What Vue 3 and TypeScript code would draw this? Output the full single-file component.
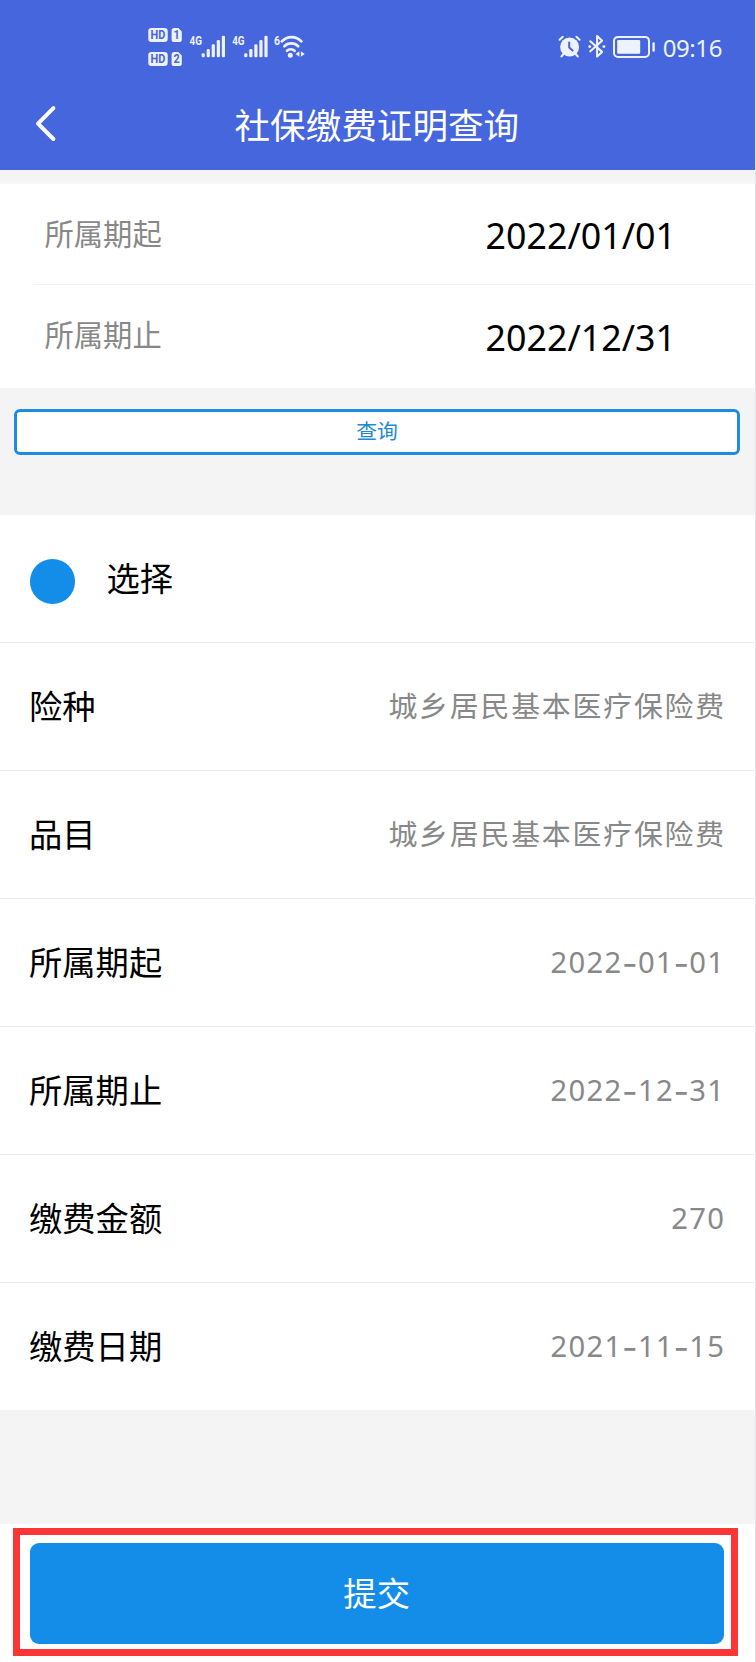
<script setup lang="ts">
interface Field {
  label: string
  value: string
}

const title = '社保缴费证明查询'

const period: Field[] = [
  { label: '所属期起', value: '2022/01/01' },
  { label: '所属期止', value: '2022/12/31' },
]

const details: Field[] = [
  { label: '险种', value: '城乡居民基本医疗保险费' },
  { label: '品目', value: '城乡居民基本医疗保险费' },
  { label: '所属期起', value: '2022-01-01' },
  { label: '所属期止', value: '2022-12-31' },
  { label: '缴费金额', value: '270' },
  { label: '缴费日期', value: '2021-11-15' },
]

const isNumeric = (value: string): boolean => /^[\d-]+$/.test(value)
const pieces = (value: string): string[] => value.split(/(-)/)

const bars = [4, 8.3, 13, 17.3, 21.6]
const signals = [0, 42.6]
</script>

<template>
  <div class="screen">
    <header class="header">
      <div class="status">
        <svg class="status-left" width="160" height="44" viewBox="148 26 160 44">
          <g fill="#eef2ff">
            <rect x="148.3" y="28" width="19.4" height="14" rx="3.2" />
            <path d="M174.2 28h4.2l3.4 3.4v8a2.6 2.6 0 0 1-2.6 2.6h-5a2.6 2.6 0 0 1-2.6-2.6v-8.8a2.6 2.6 0 0 1 2.6-2.6z" />
            <rect x="148.3" y="52" width="19.4" height="14" rx="3.2" />
            <path d="M174.2 52h4.2l3.4 3.4v8a2.6 2.6 0 0 1-2.6 2.6h-5a2.6 2.6 0 0 1-2.6-2.6v-8.8a2.6 2.6 0 0 1 2.6-2.6z" />
          </g>
          <g class="badge-text">
            <text x="150.6" y="39.3" textLength="14.8" lengthAdjust="spacingAndGlyphs">HD</text>
            <text x="173.5" y="39.3" textLength="6.2" lengthAdjust="spacingAndGlyphs">1</text>
            <text x="150.6" y="63.3" textLength="14.8" lengthAdjust="spacingAndGlyphs">HD</text>
            <text x="173.5" y="63.3" textLength="6.2" lengthAdjust="spacingAndGlyphs">2</text>
          </g>
          <g v-for="dx in signals" :key="dx" :transform="`translate(${dx} 0)`">
            <text class="net-text" x="189.6" y="45.4" textLength="12.4" lengthAdjust="spacingAndGlyphs">4G</text>
            <rect
              v-for="(h, i) in bars"
              :key="i"
              :x="201.6 + i * 5.05"
              :y="57.3 - h"
              width="3.2"
              :height="h"
              rx="1.3"
              fill="#eef2ff"
            />
          </g>
          <text class="net-text" x="274" y="45.4" textLength="6" lengthAdjust="spacingAndGlyphs">6</text>
          <g fill="none" stroke="#eef2ff" stroke-width="2.7" stroke-linecap="round">
            <path d="M281.8 41.3a13.4 13.4 0 0 1 19.6 0" />
            <path d="M284.4 46.2a9.8 9.8 0 0 1 13.8 0" />
            <path d="M287 50.8a5.8 5.8 0 0 1 7.600 0" />
          </g>
          <circle cx="290.3" cy="55.3" r="2.5" fill="#eef2ff" />
          <path d="M299.4 51.2v5.6l-3.8-2.8zM300.9 51.2v5.6l3.8-2.8z" fill="#eef2ff" />
        </svg>
        <div class="status-right">
          <svg width="98" height="28" viewBox="558 33 98 28">
            <g stroke="#eef2ff" fill="none" stroke-linecap="round" stroke-linejoin="round">
              <circle cx="569.6" cy="47" r="9.5" fill="#eef2ff" stroke="none" />
              <path d="M559.6 39.8l3.2-3M576.4 36.8l3.2 3" stroke-width="2" />
              <path d="M563.5 54l-2 2.4M575.7 54l2 2.4" stroke-width="2.2" />
              <path d="M569.2 42.4v5l3.4 3.2" stroke="#4566dd" stroke-width="2" />
              <path d="M590.3 41.3l11.8 10.6-5 4.7V36l5 4.7-11.8 10.6" stroke-width="2.1" />
              <path d="M589.6 46.6h.2M603.8 46.6h.2" stroke-width="2.8" />
              <rect x="614" y="36.9" width="35" height="20" rx="4" stroke-width="2" />
              <path d="M653.6 43.5v7" stroke-width="2.4" />
            </g>
            <rect x="617.2" y="40" width="23" height="13.8" rx="1.3" fill="#eef2ff" />
          </svg>
          <span class="clock">09:16</span>
        </div>
      </div>
      <div class="nav">
        <svg class="back" width="24" height="38" viewBox="0 0 24 38">
          <path d="M20.4 3.2L5 18.6l15.4 15.4" fill="none" stroke="#fff" stroke-width="4" stroke-linecap="round" stroke-linejoin="round" />
        </svg>
        <h1 class="title">{{ title }}</h1>
      </div>
    </header>

    <section class="period">
      <div v-for="f in period" :key="f.label" class="period-row">
        <span class="period-label">{{ f.label }}</span>
        <span class="period-value">{{ f.value }}</span>
      </div>
    </section>

    <div class="query">
      <button class="query-btn" type="button">查询</button>
    </div>

    <section class="details">
      <div class="row">
        <span class="radio"></span>
        <span class="label">选择</span>
      </div>
      <div v-for="(f, i) in details" :key="i" class="row">
        <span class="label">{{ f.label }}</span>
        <span v-if="isNumeric(f.value)" class="value number"><span v-for="(p, n) in pieces(f.value)" :key="n" :class="{ dash: p === '-' }">{{ p }}</span></span>
        <span v-else class="value">{{ f.value }}</span>
      </div>
    </section>

    <footer class="footer">
      <div class="highlight">
        <button class="submit" type="button">提交</button>
      </div>
    </footer>
  </div>
</template>

<style>
body {
  margin: 0;
  background: #fff;
}
</style>

<style scoped>
.screen {
  box-sizing: border-box;
  width: 756px;
  height: 1662px;
  overflow: hidden;
  display: flex;
  flex-direction: column;
  background: #f4f4f4;
  border-right: 1px solid #e4e4e6;
  font-family: 'Noto Sans', 'Noto Sans CJK SC', sans-serif;
  color: #000;
}

.header {
  height: 169.5px;
  flex: none;
  display: flex;
  flex-direction: column;
  background: #4566dd;
  color: #fff;
}

.status {
  height: 70px;
  padding: 26px 33px 0 148px;
  box-sizing: border-box;
  display: flex;
  justify-content: space-between;
}

.status-left {
  display: block;
}

.badge-text {
  font: 700 12.5px Roboto, sans-serif;
  fill: #4566dd;
}

.net-text {
  font: 700 13px Roboto, sans-serif;
  fill: #eef2ff;
}

.status-right {
  display: flex;
  align-items: flex-start;
  padding-top: 7px;
}

.clock {
  margin-left: 7px;
  font-size: 24px;
  line-height: 29px;
  letter-spacing: -0.4px;
  color: #eef2ff;
}

.nav {
  flex: 1;
  display: flex;
  align-items: flex-start;
  padding-left: 33px;
}

.back {
  margin-top: 35px;
}

.title {
  margin: 30px 0 0 177.5px;
  font-size: 35.6px;
  line-height: 50px;
  font-weight: 400;
}

.period {
  margin-top: 14.5px;
  flex: none;
  background: #fff;
  box-shadow: 0 -1px 3px #fafafa;
}

.period-row {
  height: 101px;
  box-sizing: border-box;
  margin-left: 33px;
  padding: 0 79px 0 11.5px;
  display: flex;
  align-items: center;
  justify-content: space-between;
}

.period-row + .period-row {
  height: 103px;
  margin-top: -1px;
  padding-bottom: 1px;
  border-top: 1px solid #f2f2f2;
  margin-bottom: 1px;
}

.period-row:last-child {
  margin-bottom: 0;
  height: 104px;
}

.period-label {
  font-size: 29.3px;
  line-height: 40px;
  padding-bottom: 2px;
  color: #888;
}

.period-value {
  font-size: 35.8px;
  line-height: 50px;
  padding-top: 1px;
}

.query {
  height: 127px;
  flex: none;
  box-sizing: border-box;
  padding: 21px 15px 0 14px;
}

.query-btn {
  display: block;
  width: 726px;
  height: 46px;
  padding: 0 0 3px;
  box-sizing: border-box;
  border: 3px solid #1e8ce0;
  border-radius: 6px;
  background: #fff;
  color: #1e8ad2;
  font: 20.8px/36px 'Noto Sans', 'Noto Sans CJK SC', sans-serif;
}

.details {
  flex: none;
  background: #fff;
}

.row {
  height: 128px;
  box-sizing: border-box;
  padding: 0 29px 0 29px;
  display: flex;
  align-items: center;
  border-bottom: 1px solid #e9e9e9;
}

.row:last-child {
  height: 127px;
  border-bottom: none;
}

.radio {
  width: 44.5px;
  height: 44.5px;
  margin: 6px 32px 0 1px;
  border-radius: 50%;
  background: #138de8;
}

.label {
  font-size: 33.3px;
  line-height: 46px;
  padding-bottom: 2px;
}

.value {
  margin-left: auto;
  font-size: 28.9px;
  line-height: 40px;
  padding-bottom: 2px;
  letter-spacing: 1.8px;
  color: #888;
}

.number {
  padding-right: 0.7px;
  font-size: 29.2px;
  letter-spacing: 1.3px;
}

.dash {
  display: inline-block;
  width: 15.4px;
  font-family: Inter, sans-serif;
  font-size: 34px;
  line-height: 30px;
  letter-spacing: 0;
  text-indent: -0.5px;
  position: relative;
  top: 3px;
}

.footer {
  margin-top: auto;
  height: 138px;
  box-sizing: border-box;
  padding: 4px 17px 0 13px;
  background: #fff;
}

.highlight {
  width: 725px;
  height: 128px;
  box-sizing: border-box;
  padding: 8px 7px 0 10px;
  border: 7px solid #fc3636;
}

.submit {
  display: block;
  width: 693.5px;
  height: 101px;
  padding: 0 0 2px;
  border: none;
  border-radius: 9px;
  background: #138de8;
  color: #fff;
  font: 33.4px/98px 'Noto Sans', 'Noto Sans CJK SC', sans-serif;
}
</style>
